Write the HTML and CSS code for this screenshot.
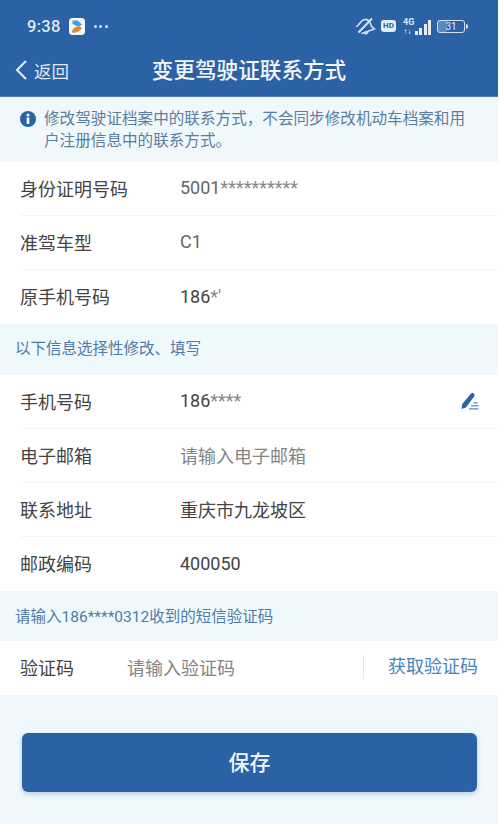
FILE: index.html
```html
<!DOCTYPE html>
<html lang="zh-CN">
<head>
<meta charset="utf-8">
<title>变更驾驶证联系方式</title>
<link rel="stylesheet" href="styles.css">
</head>
<body>
<div class="phone">
  <header class="top">
    <div class="status">
      <div class="status-left">
        <span class="time">9:38</span>
        <svg class="app-icon" width="16" height="17" viewBox="0 0 16 17"><rect width="16" height="17" rx="3.500" fill="#f4f8fc"/><path d="M3.500 2.500h5l4.500 4-3 2.500-6.500-3z" fill="#38a4e4"/><path d="M3 14c0-3 3-5.500 6-5.500 2 0 3.500.8 3.500 1.800 0 1.700-3 3.700-6 4.200-2 .3-3.500.3-3.500-.5z" fill="#dd8a35"/></svg>
        <span class="dots"><i></i><i></i><i></i></span>
      </div>
      <div class="status-right">
        <svg class="bell" width="21" height="18" viewBox="0 0 21 18" fill="none" stroke="#d5e1ef" stroke-width="1.600"><path d="M1 9.500c2-.2 2.500-1.500 3.500-3S7 3 9.500 2.500c2.500-.4 4.500 1 5.500 3s1 3.500 2.500 5l2 1.500-13 4.500"/><path d="M9.500 16.500c1.300.6 3 0 3.500-1.500"/><path d="M3.500 15.500 17 1.500" stroke-width="2"/></svg>
        <span class="hd">HD</span>
        <span class="net"><b>4G</b><em>↑↓</em><span class="bars"><i class="b1"></i><i class="b2"></i><i class="b3"></i><i class="b4"></i></span></span>
        <span class="battery"><span class="cell">31</span></span>
      </div>
    </div>
    <div class="nav">
      <div class="back">
        <svg width="14" height="22" viewBox="0 0 14 22" fill="none" stroke="#e6edf5" stroke-width="2"><path d="M12 2 3 11l9 9"/></svg>
        <span>返回</span>
      </div>
      <h1>变更驾驶证联系方式</h1>
    </div>
  </header>

  <section class="notice">
    <svg class="info" width="18" height="18" viewBox="0 0 18 18"><circle cx="9" cy="9" r="8" fill="#2a63a8"/><rect x="7.700" y="7.500" width="2.600" height="6.500" fill="#fff"/><rect x="7.700" y="3.800" width="2.600" height="2.500" fill="#fff"/></svg>
    <p>修改驾驶证档案中的联系方式，不会同步修改机动车档案和用户注册信息中的联系方式。</p>
  </section>

  <section class="group">
    <div class="row"><span class="label">身份证明号码</span><span class="value muted">5001<span class="stars">**********</span></span></div>
    <div class="row"><span class="label">准驾车型</span><span class="value muted">C1</span></div>
    <div class="row"><span class="label">原手机号码</span><span class="value">186<span class="stars">*'</span></span></div>
  </section>

  <div class="section-title first">以下信息选择性修改、填写</div>

  <section class="group">
    <div class="row"><span class="label">手机号码</span><span class="value">186<span class="stars">****</span></span>
      <svg class="edit" width="18" height="18" viewBox="0 0 18 18"><path d="M.5 17l.8-5L9.500 2c.8-1 2.200-1.200 3.200-.5s1.100 2.100.4 3.100L5 15.500z" fill="#2a63a8"/><path d="M8 16.800h9.500M10 13.800h7.500M12.500 10.800h4" stroke="#5a87bd" stroke-width="1.300"/></svg>
    </div>
    <div class="row"><span class="label">电子邮箱</span><span class="value placeholder">请输入电子邮箱</span></div>
    <div class="row"><span class="label">联系地址</span><span class="value">重庆市九龙坡区</span></div>
    <div class="row"><span class="label">邮政编码</span><span class="value">400050</span></div>
  </section>

  <div class="section-title second">请输入186****0312收到的短信验证码</div>

  <section class="group">
    <div class="row code-row">
      <span class="label code-label">验证码</span>
      <span class="value placeholder code-input">请输入验证码</span>
      <span class="get-code">获取验证码</span>
    </div>
  </section>

  <button class="save" type="button">保存</button>
</div>
</body>
</html>
```
FILE: styles.css
```css
* { box-sizing: border-box; }
html, body { margin: 0; padding: 0; }
body {
  width: 500px;
  height: 824px;
  overflow: hidden;
  background: #fff;
  font-family: "Roboto", "Noto Sans CJK SC", sans-serif;
}
.phone {
  width: 498px;
  height: 824px;
  background: #eff9fb;
  display: flex;
  flex-direction: column;
}
.top {
  height: 97px;
  background: #2b62a6;
  color: #fff;
  border-bottom: 1px solid #4f80b8;
}
.status {
  height: 52px;
  padding: 0 30px 0 27px;
  display: flex;
  justify-content: space-between;
  align-items: center;
}
.status-left { display: flex; align-items: center; gap: 8px; }
.time { font: 500 16.500px "Roboto", sans-serif; color: #dfe8f3; letter-spacing: .3px; }
.app-icon { display: block; }
.dots { display: flex; gap: 2.500px; margin-left: 1px; }
.dots i { width: 3px; height: 3px; border-radius: 50%; background: #d5e1ef; }
.status-right { display: flex; align-items: center; gap: 5px; }
.bell { display: block; }
.hd {
  width: 15px;
  height: 12px;
  border-radius: 3px;
  background: #e4ecf5;
  color: #2b62a6;
  font: 700 8px/12px "Roboto", sans-serif;
  text-align: center;
}
.net { position: relative; width: 28px; height: 17px; display: block; margin-left: 2px; }
.net b { position: absolute; left: 0; top: 0; font: 700 9px/9px "Roboto", sans-serif; color: #dfe8f3; }
.net em { position: absolute; left: 0; bottom: 0; font: 400 6px/6px "DejaVu Sans", sans-serif; letter-spacing: -1px; color: #c5d5e8; }
.bars { position: absolute; right: 0; bottom: 0; display: flex; align-items: flex-end; gap: 1.500px; }
.bars i { width: 3px; background: #e4ecf5; display: block; }
.bars .b1 { height: 4px; }
.bars .b2 { height: 7px; }
.bars .b3 { height: 11px; }
.bars .b4 { height: 15px; }
.battery { display: flex; align-items: center; margin-left: 1px; }
.battery::after { content: ""; width: 2px; height: 5px; margin-left: 1px; background: #d5e1ef; border-radius: 0 2px 2px 0; }
.cell {
  width: 28px;
  height: 13px;
  border: 1px solid #d5e1ef;
  border-radius: 3px;
  font: 400 10px/11px "Roboto", sans-serif;
  text-align: center;
  color: #e4ecf5;
  background: linear-gradient(90deg, #5d88bb 0 36%, transparent 36%);
}
.nav { height: 44px; display: flex; align-items: center; position: relative; padding-bottom: 8px; }
.back { display: flex; align-items: center; gap: 6px; padding-left: 14px; font-size: 17.500px; color: #dfe8f3; }
.nav h1 {
  position: absolute;
  left: 0;
  right: 0;
  top: 3px;
  margin: 0;
  text-align: center;
  font-size: 21.600px;
  line-height: 32px;
  font-weight: 500;
  color: #f3f6fa;
}
.notice {
  height: 65px;
  background: #f1f8fc;
  display: flex;
  padding: 11px 20px 0 19px;
  gap: 7px;
}
.info { flex: none; margin-top: 2px; }
.notice p {
  margin: 0;
  font-size: 15.600px;
  line-height: 22px;
  color: #5b7d9f;
}
.group { background: #fff; }
.row {
  height: 54px;
  margin-left: 20px;
  display: flex;
  align-items: center;
  border-bottom: 1px solid #f3f5f6;
  padding-right: 19px;
  padding-bottom: 2px;
}
.group .row:last-child { border-bottom: 0; }
.label { width: 160px; font-size: 18px; color: #444; flex: none; }
.value { flex: 1; font-size: 18px; color: #444; }
.muted { color: #666; }
.stars { color: #888; }
.placeholder { color: #858585; }
.section-title { padding-left: 15px; font-size: 15.500px; color: #4f7ba8; display: flex; align-items: center; }
.first { height: 51px; padding-bottom: 5px; }
.second { height: 50px; padding-bottom: 2px; }
.code-label { width: 107px; }
.code-row { padding-right: 20px; }
.get-code {
  width: 115px;
  flex: none;
  height: 24px;
  line-height: 24px;
  border-left: 1px solid #e6e9ea;
  text-align: right;
  font-size: 18px;
  color: #4a83bb;
}
.save {
  width: 455px;
  height: 59px;
  margin: 38px 0 0 22px;
  padding: 0 0 3px;
  border: 0;
  border-radius: 6px;
  background: #2b62a6;
  box-shadow: 0 2px 5px rgba(60, 100, 150, .3);
  color: #f0f4f8;
  font-family: inherit;
  font-size: 21px;
  font-weight: 500;
}
```
